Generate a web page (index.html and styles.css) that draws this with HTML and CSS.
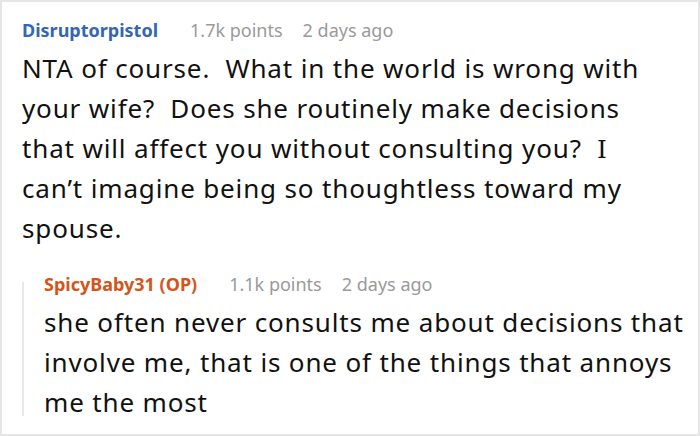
FILE: index.html
```html
<!DOCTYPE html>
<html>
<head>
<meta charset="utf-8">
<link rel="stylesheet" href="styles.css">
</head>
<body>
<div class="card">
  <div class="comment">
    <div class="meta">
      <span class="author">Disruptorpistol</span>
      <span class="info">1.7k points</span>
      <span class="info">2 days ago</span>
    </div>
    <p class="text main-text">NTA of course.&nbsp; What in the world is wrong with your wife?&nbsp; Does she routinely make decisions that will affect you without consulting you?&nbsp; <span class="serif-i">I</span> can’t imagine being so thoughtless toward my spouse.</p>
    <div class="reply">
      <div class="thread-line"></div>
      <div class="reply-body">
        <div class="meta">
          <span class="author op">SpicyBaby31 (OP)</span>
          <span class="info">1.1k points</span>
          <span class="info">2 days ago</span>
        </div>
        <p class="text">she often never consults me about decisions that involve me, that is one of the things that annoys me the most</p>
      </div>
    </div>
  </div>
</div>
</body>
</html>
```
FILE: styles.css
```css
* { box-sizing: border-box; }
html, body { margin: 0; padding: 0; background: #fff; }
body { font-family: "Noto Sans", sans-serif; color: #111; }
.card {
  width: 700px;
  height: 436px;
  border: 2px solid #e6e6e6;
  padding: 12px 8px 0 20px;
  overflow: hidden;
}
.meta { display: flex; align-items: baseline; font-size: 18px; line-height: 32px; margin-bottom: 2px; }
.author { font-weight: 700; color: #3366b3; margin-right: 32px; }
.author.op { color: #d4541b; }
.info { color: #9a9a9a; margin-right: 20px; }
.text { margin: 0; font-size: 26px; line-height: 40px; letter-spacing: 0.85px; }
.main-text { margin-right: 22px; }
.serif-i { font-family: "DejaVu Serif", serif; font-size: 25px; line-height: 1; letter-spacing: 0; }
.reply { display: flex; margin-top: 20px; }
.thread-line { width: 2px; flex: none; background: #e8e8e8; margin: 14px 0 6px; }
.reply-body { flex: 1; padding-left: 20px; }
```
